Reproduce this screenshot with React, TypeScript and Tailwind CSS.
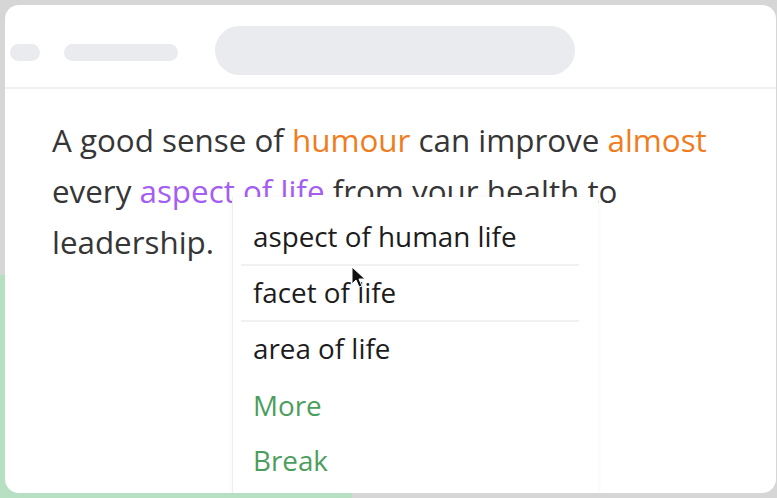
import React from "react";

const items = [
  { label: "aspect of human life", divider: true },
  { label: "facet of life", divider: true },
  { label: "area of life", divider: false },
];

function Cursor() {
  return (
    <svg
      className="absolute left-[351px] top-[266px]"
      width="16"
      height="24"
      viewBox="0 0 16 24"
    >
      <path
        d="M1 1 L1 18 L5 14 L8 21 L11 20 L8 13 L14 13 Z"
        fill="#111"
        stroke="#fff"
        strokeWidth="1"
        strokeLinejoin="round"
      />
    </svg>
  );
}

export default function App() {
  return (
    <div className="relative w-[777px] h-[498px] overflow-hidden bg-[#d6d6d6] font-['Open_Sans',sans-serif]">
      <div className="absolute left-0 top-[275px] bottom-0 w-[352px] bg-[#b7dfc1]" />

      <div className="relative ml-[5px] mt-[5px] w-[771px] h-[488px] rounded-[14px] bg-white overflow-hidden">
        {/* top bar */}
        <div className="h-[84px] pt-[9px] pl-[5px] flex items-center border-b-2 border-[#eef0f2]">
          <div className="mt-[4px] w-[30px] h-[17px] rounded-full bg-[#e9ebee]" />
          <div className="mt-[4px] ml-[24px] w-[114px] h-[17px] rounded-full bg-[#e9ebee]" />
          <div className="ml-[37px] w-[360px] h-[49px] rounded-full bg-[#e9ebee]" />
        </div>

        <p className="pl-[47px] pt-[25px] text-[31.35px] leading-[51px] text-[#363636]">
          A good sense of <span className="text-[#f07c1d]">humour</span> can improve{" "}
          <span className="text-[#f07c1d]">almost</span>
          <br />
          every <span className="text-[#a45ef2]">aspect of life</span> from your health to
          <br />
          leadership.
        </p>

        {/* suggestion menu */}
        <div className="absolute left-[227px] top-[192px] w-[366px] h-[300px] flex flex-col bg-white border-l border-[#eeeeee] shadow-[0_0_6px_rgba(0,0,0,0.04)] pt-[13px]">
          {items.map((it) => (
            <div key={it.label} className="flex flex-col">
              <div className="h-[54px] pl-[20px] flex items-center text-[27.8px] text-[#1c1c1c]">
                {it.label}
              </div>
              {it.divider && <div className="ml-[8px] mr-[19px] h-[2px] bg-[#f1f1f1]" />}
            </div>
          ))}
          <div className="mt-[2px] h-[55px] pl-[20px] flex items-center text-[27.8px] text-[#4c9e5e]">
            More
          </div>
          <div className="h-[56px] pl-[20px] flex items-center text-[27.8px] text-[#4c9e5e]">
            Break
          </div>
        </div>
      </div>

      <Cursor />
    </div>
  );
}
